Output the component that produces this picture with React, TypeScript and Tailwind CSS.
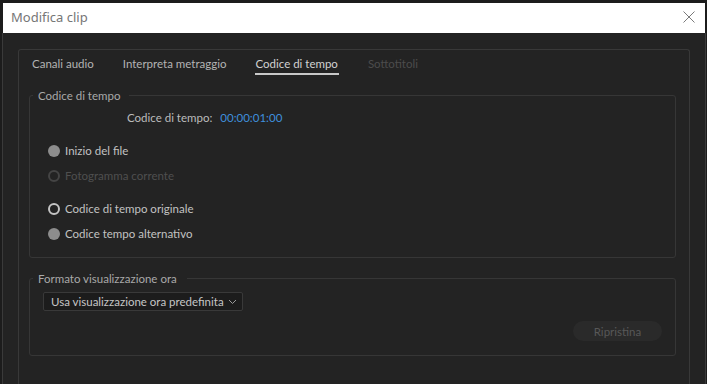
import React from 'react'

const font = { fontFamily: 'Lato, "Noto Sans", sans-serif' }

const tabs = [
  { label: 'Canali audio', state: 'idle' },
  { label: 'Interpreta metraggio', state: 'idle' },
  { label: 'Codice di tempo', state: 'active' },
  { label: 'Sottotitoli', state: 'disabled' },
]

const Radio = ({ label, kind }: { label: string; kind: 'filled' | 'ring' | 'off' }) => (
  <div className="flex items-center gap-[5px] h-[25px]">
    {kind === 'filled' && <span className="w-[12px] h-[12px] rounded-full bg-[#8d8d8d]" />}
    {kind === 'ring' && <span className="w-[12px] h-[12px] rounded-full border-2 border-[#c4c4c4]" />}
    {kind === 'off' && <span className="w-[12px] h-[12px] rounded-full border-2 border-[#444444]" />}
    <span className={kind === 'off' ? 'text-[#4f4f4f]' : 'text-[#c2c2c2]'}>{label}</span>
  </div>
)

export default function App() {
  return (
    <div className="w-[707px] h-[384px] overflow-hidden bg-[#1c1c1c] pt-[3px] flex flex-col text-[11.5px]" style={font}>
      <div className="ml-[3px] mr-[2px] h-[30px] bg-white flex items-center justify-between pl-[8px] pr-[10px]">
        <span className="text-[#767676] text-[13px]" style={{ fontFamily: '"Noto Sans", sans-serif' }}>Modifica clip</span>
        <svg width="12" height="12" viewBox="0 0 12 12" className="mt-[-2px]">
          <path d="M0.5 0.5 L11.5 11.5 M11.5 0.5 L0.5 11.5" stroke="#7a7a7a" strokeWidth="1" fill="none" />
        </svg>
      </div>
      <div className="flex-1 ml-[2px] mr-[1px] border-l border-r border-[#3a3a3a] bg-[#232323] pt-[16px] pl-[15px] pr-[15px]">
        <div className="h-full border border-b-0 border-[#383838] rounded-t-[3px]">
          <div className="flex gap-[29px] pl-[13px] pt-[5px] h-[25px]">
            {tabs.map(t => (
              <div
                key={t.label}
                className={
                  t.state === 'active'
                    ? 'text-[#d2d2d2] border-b-2 border-[#c8c8c8] pr-[1px]'
                    : t.state === 'disabled'
                      ? 'text-[#4c4c4c]'
                      : 'text-[#b4b4b4]'
                }
              >
                {t.label}
              </div>
            ))}
          </div>
          <fieldset className="ml-[10px] mr-[13px] mt-[12px] h-[171px] border border-[#363636] rounded-[3px] px-0">
            <legend className="ml-[3px] pl-[5px] pr-[9px] text-[#a9a9a9]">Codice di tempo</legend>
            <div className="flex items-center pl-[97px] mt-[4px] h-[18px]">
              <span className="text-[#bcbcbc]">Codice di tempo:</span>
              <span className="ml-[8px] text-[#3f8fdc]">00:00:01:00</span>
            </div>
            <div className="pl-[18px] mt-[12px] flex flex-col">
              <Radio label="Inizio del file" kind="filled" />
              <Radio label="Fotogramma corrente" kind="off" />
              <div className="h-[8px]" />
              <Radio label="Codice di tempo originale" kind="ring" />
              <Radio label="Codice tempo alternativo" kind="filled" />
            </div>
          </fieldset>
          <fieldset className="ml-[10px] mr-[13px] mt-[12px] h-[86px] border border-[#363636] rounded-[3px] px-0">
            <legend className="ml-[3px] pl-[5px] pr-[10px] text-[#a9a9a9]">Formato visualizzazione ora</legend>
            <div className="pl-[13px] mt-[5px]">
              <div className="w-[200px] h-[19px] flex items-center justify-between bg-[#1c1c1c] border border-[#393939] rounded-[2px] pl-[7px] pr-[5px] text-[#c6c6c6] whitespace-nowrap">
                <span>Usa visualizzazione ora predefinita</span>
                <svg width="9" height="6" viewBox="0 0 9 6">
                  <path d="M1 1 L4.5 4.5 L8 1" stroke="#9a9a9a" strokeWidth="1" fill="none" />
                </svg>
              </div>
            </div>
            <div className="flex justify-end pr-[13px] mt-[10px]">
              <div className="w-[89px] h-[20px] rounded-full bg-[#2a2a2a] flex items-center justify-center text-[#585858]">Ripristina</div>
            </div>
          </fieldset>
        </div>
      </div>
    </div>
  )
}
